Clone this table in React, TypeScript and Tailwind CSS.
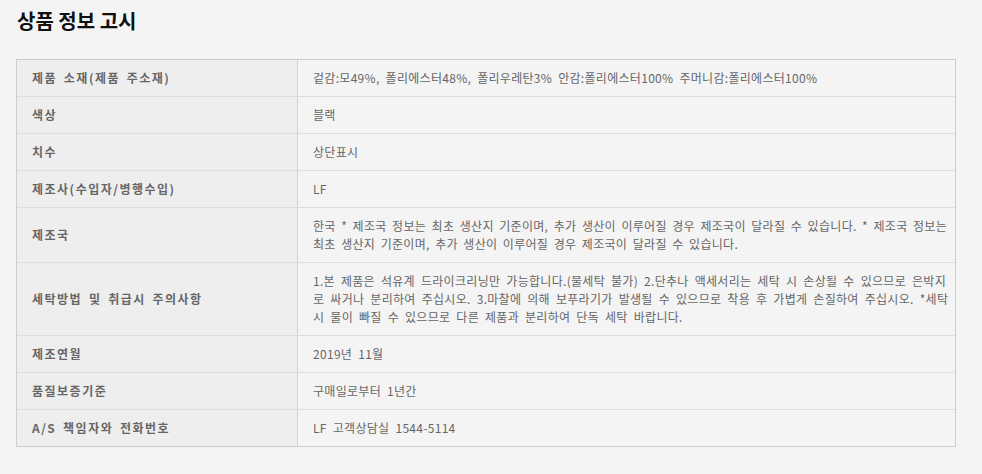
import React from "react";

const rows: { label: string; value: string; tight?: boolean }[] = [
  {
    label: "제품 소재(제품 주소재)",
    value:
      "겉감:모49%, 폴리에스터48%, 폴리우레탄3% 안감:폴리에스터100% 주머니감:폴리에스터100%",
  },
  { label: "색상", value: "블랙" },
  { label: "치수", value: "상단표시" },
  { label: "제조사(수입자/병행수입)", value: "LF" },
  {
    label: "제조국",
    value:
      "한국 * 제조국 정보는 최초 생산지 기준이며, 추가 생산이 이루어질 경우 제조국이 달라질 수 있습니다. * 제조국 정보는 최초 생산지 기준이며, 추가 생산이 이루어질 경우 제조국이 달라질 수 있습니다.",
    tight: true,
  },
  {
    label: "세탁방법 및 취급시 주의사항",
    value:
      "1.본 제품은 석유계 드라이크리닝만 가능합니다.(물세탁 불가) 2.단추나 액세서리는 세탁 시 손상될 수 있으므로 은박지로 싸거나 분리하여 주십시오. 3.마찰에 의해 보푸라기가 발생될 수 있으므로 착용 후 가볍게 손질하여 주십시오. *세탁 시 물이 빠질 수 있으므로 다른 제품과 분리하여 단독 세탁 바랍니다.",
  },
  { label: "제조연월", value: "2019년 11월" },
  { label: "품질보증기준", value: "구매일로부터 1년간" },
  { label: "A/S 책임자와 전화번호", value: "LF 고객상담실 1544-5114" },
];

export default function App() {
  return (
    <div
      className="w-[982px] h-[474px] bg-[#f4f4f4] overflow-hidden"
      style={{ fontFamily: '"Noto Sans CJK KR", "Noto Sans", sans-serif' }}
    >
      <h1 className="pt-[9px] pl-[17px] text-[20px] leading-[24px] font-bold text-[#111] mb-[26px]">
        상품 정보 고시
      </h1>
      <div className="ml-[16px] w-[940px] border border-[#cccccc] border-b-0">
        {rows.map((r, i) => (
          <div
            key={i}
            className={`grid grid-cols-[281px_1fr] border-b ${
              i === rows.length - 1 ? "border-[#cccccc]" : "border-[#dddddd]"
            }`}
          >
            <div className="bg-[#eeeeee] border-r border-[#d3d3d3] pl-[15px] pr-[8px] py-[9px] flex items-center text-[12px] leading-[18px] font-bold text-[#666666] tracking-[1.5px] [word-spacing:2.5px]">
              {r.label}
            </div>
            <div
              className={`bg-[#f4f4f4] pl-[15px] pr-0 py-[9px] text-[12px] leading-[18px] text-[#666666] tracking-[0.3px] ${
                r.tight ? "[word-spacing:2.5px]" : "[word-spacing:3px]"
              }`}
            >
              {r.value}
            </div>
          </div>
        ))}
      </div>
    </div>
  );
}
